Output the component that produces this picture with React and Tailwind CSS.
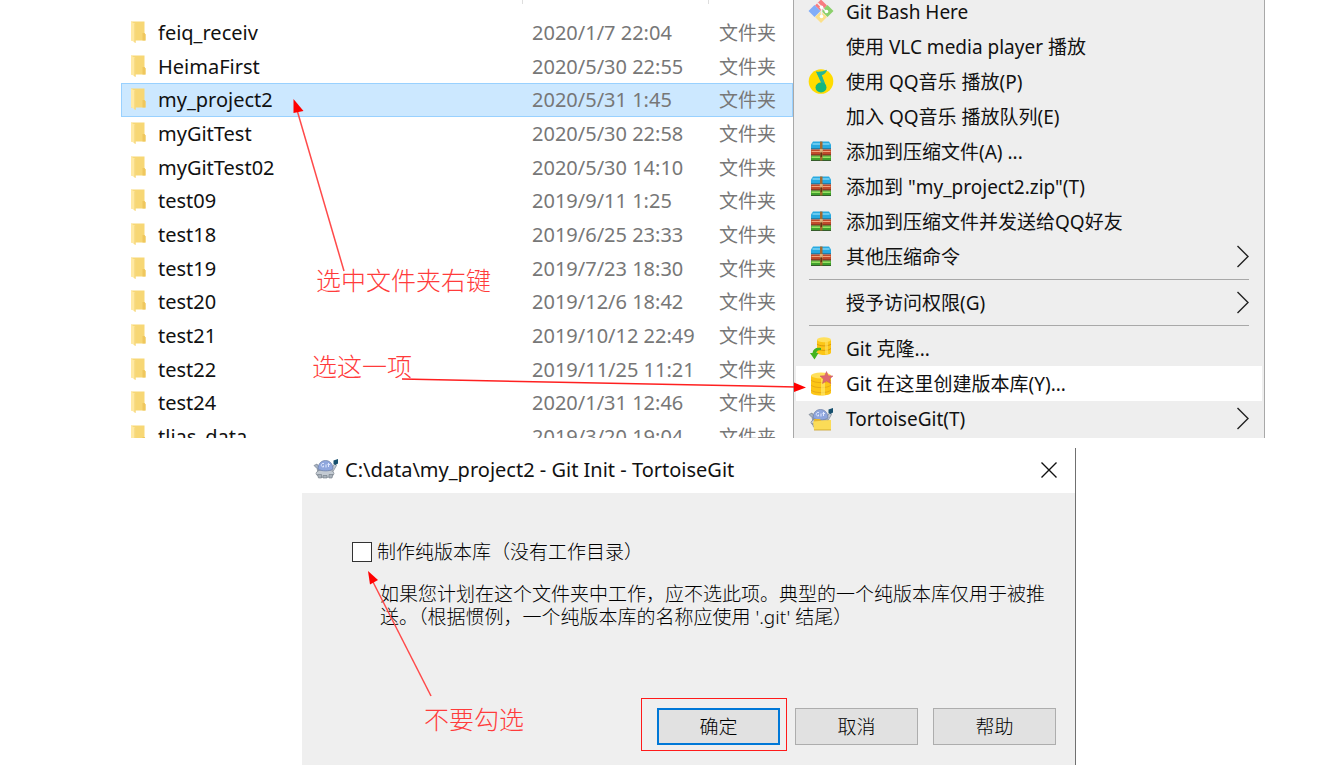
import { useState } from 'react';

const files = [
  { name: 'feiq_receiv', date: '2020/1/7 22:04' },
  { name: 'HeimaFirst', date: '2020/5/30 22:55' },
  { name: 'my_project2', date: '2020/5/31 1:45' },
  { name: 'myGitTest', date: '2020/5/30 22:58' },
  { name: 'myGitTest02', date: '2020/5/30 14:10' },
  { name: 'test09', date: '2019/9/11 1:25' },
  { name: 'test18', date: '2019/6/25 23:33' },
  { name: 'test19', date: '2019/7/23 18:30' },
  { name: 'test20', date: '2019/12/6 18:42' },
  { name: 'test21', date: '2019/10/12 22:49' },
  { name: 'test22', date: '2019/11/25 11:21' },
  { name: 'test24', date: '2020/1/31 12:46' },
  { name: 'tlias_data', date: '2019/3/20 19:04' },
];

const menu = [
  { label: 'Git Bash Here', icon: GitBashIcon },
  { label: '使用 VLC media player 播放' },
  { label: '使用 QQ音乐 播放(P)', icon: MusicIcon },
  { label: '加入 QQ音乐 播放队列(E)' },
  { label: '添加到压缩文件(A) ...', icon: ZipIcon },
  { label: '添加到 "my_project2.zip"(T)', icon: ZipIcon },
  { label: '添加到压缩文件并发送给QQ好友', icon: ZipIcon },
  { label: '其他压缩命令', icon: ZipIcon, sub: true },
  { separator: true },
  { label: '授予访问权限(G)', sub: true },
  { separator: true },
  { label: 'Git 克隆...', icon: CloneIcon },
  { label: 'Git 在这里创建版本库(Y)...', icon: CreateIcon, active: true },
  { label: 'TortoiseGit(T)', icon: TortoiseFolderIcon, sub: true },
];

function FolderIcon() {
  return (
    <svg className="w-4 h-6 shrink-0" viewBox="0 0 16 24">
      <path d="M1 .5h13.5v11.500l1 1.500v6H1z" fill="#f7d775" />
      <path d="M12.500 12h2l1 1.500v6h-3z" fill="#efc75e" />
      <path d="M1 .5l4.500 2.500v19L1 19z" fill="#ffe9a2" />
      <path d="M5.500 3v19l-1-.7V3z" fill="#f2cf6d" />
    </svg>
  );
}

function GitBashIcon() {
  return (
    <svg className="w-[26px] h-[26px]" viewBox="0 0 26 26">
      <path d="M13 .5l6 6-6 6-6-6z" fill="#f77c80" />
      <path d="M6.500 6l6 6-6 6-6-6z" fill="#82adf8" />
      <path d="M19.500 6l6 6-6 6-6-6z" fill="#8bd06c" />
      <path d="M13 12l6 6-6 6-6-6z" fill="#fbe08a" />
      <path d="M9.500 4l4 4v10M13.500 8l5 5" fill="none" stroke="#eeeeee" strokeWidth="1.6" />
      <circle cx="13.500" cy="8.300" r="1.800" fill="#fff" />
      <circle cx="18.500" cy="12.500" r="1.800" fill="#fff" />
      <circle cx="13.500" cy="17.500" r="1.800" fill="#fff" />
    </svg>
  );
}

function MusicIcon() {
  return (
    <svg className="w-[26px] h-[26px]" viewBox="0 0 26 26">
      <circle cx="13" cy="12.500" r="12.300" fill="#ffdc00" />
      <path d="M8 2.500c3.500.6 7.500-.2 11-1.800-.6 2.800-2.700 4.700-5.200 5.600L18 17h-2.500z" fill="#25b795" />
      <path d="M8 2.500l5.500 4L18 18h-3z" fill="#25b795" />
      <ellipse cx="13" cy="18.500" rx="5.500" ry="5" fill="#14b77c" />
    </svg>
  );
}

function ZipIcon() {
  return (
    <svg className="w-[26px] h-[26px]" viewBox="0 0 26 26">
      <path d="M5 2.500h16l2 3V10H3V5.500z" fill="#27a9e0" />
      <path d="M4.500 5h17" stroke="#7fd4f5" strokeWidth="1.500" />
      <path d="M3 10h20" stroke="#1c5571" strokeWidth="1" />
      <path d="M3 10.500h20v6H3z" fill="#c04b2b" />
      <path d="M3.500 12.500h19" stroke="#f0a27b" strokeWidth="1" />
      <path d="M3 16h20" stroke="#5e2a1a" strokeWidth="1" />
      <path d="M3 16.500h20v5H3z" fill="#3fa02c" />
      <path d="M3.500 18.200h19" stroke="#a5e86a" strokeWidth="1.400" />
      <path d="M3 21.500h20" stroke="#355c2b" strokeWidth="1" />
      <path d="M12 2.500h2.500v19H12z" fill="#a5692e" />
      <path d="M11.800 10h3v3.500h-3z" fill="#d9ae74" />
      <path d="M12.500 13.500h1.500V18h-1.500z" fill="#633513" />
    </svg>
  );
}

function CloneIcon() {
  return (
    <svg className="w-[26px] h-[26px]" viewBox="0 0 26 26">
      <path d="M9 4v12.500c0 1.500 3 2.500 7 2.500s7-1 7-2.500V4z" fill="#fcc616" />
      <ellipse cx="16" cy="3.800" rx="7" ry="2.500" fill="#ffe05c" />
      <path d="M9 8c2 2.500 12 2.500 14 0M9 12.500c2 2.500 12 2.500 14 0" fill="none" stroke="#dc9a0a" strokeWidth="1" />
      <path d="M17 5.500h3v13h-3z" fill="#ffe569" opacity=".6" />
      <path d="M13 12c-5-1-8 1-8.500 5H2l4.500 6.500L10.500 17h-2c0-2 1.500-3 4.500-3z" fill="#43b31f" />
    </svg>
  );
}

function CreateIcon() {
  return (
    <svg className="w-[26px] h-[26px]" viewBox="0 0 26 26">
      <path d="M3 4.500v17c0 2 4 3 10 3s10-1 10-3v-17z" fill="#fcc616" />
      <ellipse cx="13" cy="4.500" rx="10" ry="3" fill="#ffe05c" />
      <path d="M3 9c3 3.500 17 3.500 20 0M3 14c3 3.500 17 3.500 20 0M3 19c3 3.500 17 3.500 20 0" fill="none" stroke="#e8ab14" strokeWidth="1" />
      <path d="M13 8h4v16h-4z" fill="#fff07b" opacity=".6" />
      <path d="M18.500.5l1.800 4.200 4.700.3-3.500 3 1.200 4.500-4.200-2.500-4 2.500 1-4.500-3.500-3 4.700-.3z" fill="#de6970" stroke="#c9545c" strokeWidth=".5" />
    </svg>
  );
}

function TortoiseIcon({ folder = false }) {
  return (
    <svg className="w-[26px] h-[26px]" viewBox="0 0 26 26">
      <path d="M1 8.500l3-1.500 3 5-2 3-1-3.500z" fill="#a9b5c5" stroke="#66717f" strokeWidth=".6" />
      <path d="M18 12l3.500-5 2 1.500-3.500 6z" fill="#c4ccd6" stroke="#66717f" strokeWidth=".6" />
      <path d="M20.500 3.500l4.500-1.500v4.500l-2.500 1.500-2-1z" fill="#17506e" />
      <ellipse cx="12" cy="16.500" rx="9" ry="4" fill="#c3cad2" stroke="#717a84" strokeWidth=".6" />
      <path d="M4.500 17.500h4v3.500h-3zM10 18.500h4V21h-4zM16 17.500h4L19 21h-3z" fill="#aab2bb" stroke="#717a84" strokeWidth=".6" />
      <path d="M5 12c0-5.500 3.500-8.500 7.500-8.500S20 6.500 20 12c-3 2.500-12 2.500-15 0z" fill="#8fa6dd" stroke="#6a7ca3" strokeWidth=".7" />
      <path d="M11 6.500c-3-1-4 3.500-.5 3.500V8.500M13 7.500v3M15.500 6v4M14.500 7.500h2.500" fill="none" stroke="#dfe8ff" strokeWidth="1" />
      {folder && (
        <>
          <path d="M6 13h6l1 1.500h10V24H6z" fill="#e5b52e" />
          <path d="M5 15.500l18-1.500v10H6z" fill="#fbdc57" />
          <path d="M6 24h17" stroke="#c99f21" strokeWidth=".8" />
        </>
      )}
    </svg>
  );
}

function TortoiseFolderIcon() {
  return <TortoiseIcon folder />;
}

function Chevron() {
  return (
    <svg className="w-3.5 h-6" viewBox="0 0 14 24" fill="none" stroke="#222" strokeWidth="1.400">
      <path d="M1.500 1l10.500 10.500L1.500 22" />
    </svg>
  );
}

function Note({ className, children }) {
  return (
    <p className={`absolute whitespace-nowrap text-[25px] leading-8 font-light text-[#ff3b3b] ${className}`}>
      {children}
    </p>
  );
}

function FileList() {
  const [selected, setSelected] = useState('my_project2');

  return (
    <div className="flex-1 min-w-0">
      <div className="flex h-4 items-start">
        <div className="flex-1 h-1"></div>
        <div className="w-[187px] h-1 border-x border-[#dedede]"></div>
        <div className="w-[84px]"></div>
      </div>
      <table className="w-full h-[438px] table-fixed border-collapse">
        <colgroup>
          <col />
          <col className="w-[187px]" />
          <col className="w-[84px]" />
        </colgroup>
        <tbody>
          {files.map((file) => (
            <tr
              key={file.name}
              onClick={() => setSelected(file.name)}
              className={
                selected === file.name
                  ? 'bg-[#cce8ff] outline outline-[#99d1ff] -outline-offset-1'
                  : ''
              }
            >
              <td className="p-0 pl-[9px]">
                <div className="flex items-center gap-3">
                  <FolderIcon />
                  <span className="text-xl leading-6 text-[#111]">{file.name}</span>
                </div>
              </td>
              <td className="p-0 pl-2.5 text-xl leading-6 text-[#777]">{file.date}</td>
              <td className="p-0 pl-2.5 text-[#777]">文件夹</td>
            </tr>
          ))}
        </tbody>
      </table>
    </div>
  );
}

function ContextMenu() {
  return (
    <div className="w-[472px] h-full shrink-0 flex flex-col justify-end overflow-hidden border-x border-[#a8a8a8] bg-[#eeeeee] px-0.5 pb-0.5">
      {menu.map((item, i) =>
        item.separator ? (
          <div key={i} className="h-[11px] shrink-0 px-[13px] flex items-center">
            <hr className="w-full border-[#a8a8a8]" />
          </div>
        ) : (
          <button
            key={i}
            className={`h-[35px] shrink-0 w-full flex items-center gap-3 pl-3 pr-3 text-left text-[#111] ${
              item.active ? 'bg-white' : ''
            }`}
          >
            <span className="w-[26px] shrink-0">{item.icon && <item.icon />}</span>
            <span className="flex-1">{item.label}</span>
            {item.sub && <Chevron />}
          </button>
        )
      )}
    </div>
  );
}

function InitDialog() {
  const [bare, setBare] = useState(false);
  const button = 'w-[123px] h-[37px] bg-[#e1e1e1] text-black';

  return (
    <div className="relative ml-[302px] mr-[246px] border-r border-[#707070] bg-[#efefef]">
      <div className="flex items-center h-[45px] bg-white pl-[11px] pr-[18px] pb-0.5">
        <TortoiseIcon />
        <h2 className="flex-1 pl-1.5 text-xl leading-6 text-[#111]">C:\data\my_project2 - Git Init - TortoiseGit</h2>
        <button aria-label="关闭">
          <svg className="w-4 h-4" viewBox="0 0 16 16" stroke="#111" strokeWidth="1.400">
            <path d="M.5.5l15 15M15.500.5l-15 15" />
          </svg>
        </button>
      </div>

      <div className="pt-[47px] pl-[50px] pr-[19px] pb-5">
        <label className="flex items-center gap-[5px] text-black font-light">
          <input
            type="checkbox"
            checked={bare}
            onChange={(e) => setBare(e.target.checked)}
            className="appearance-none w-5 h-5 border border-[#333] bg-white checked:bg-[#0078d7]"
          />
          制作纯版本库（没有工作目录）
        </label>

        <p className="mt-[19px] ml-7 leading-[23px] text-black font-light">
          如果您计划在这个文件夹中工作，应不选此项。典型的一个纯版本库仅用于被推送。（根据惯例，一个纯版本库的名称应使用 '.git' 结尾）
        </p>

        <div className="flex justify-end gap-[15px] mt-[79px] font-light">
          <div className="relative">
            <button className={`${button} border-2 border-[#0078d7]`}>确定</button>
            <div className="absolute -left-4 -right-[7px] -top-2.5 -bottom-1.5 border border-[#ff1a1a] pointer-events-none"></div>
          </div>
          <button className={`${button} border border-[#adadad]`}>取消</button>
          <button className={`${button} border border-[#adadad]`}>帮助</button>
        </div>
      </div>

      {/* arrow to the tick box */}
      <svg className="absolute left-[60px] top-[120px] w-[72px] h-[132px] pointer-events-none" viewBox="0 0 72 132">
        <path d="M69 128L10 12" stroke="#ff4a4a" strokeWidth="1.500" />
        <path d="M6 3l10 9-8 4.500z" fill="#ff0000" />
      </svg>
      <Note className="left-[122px] top-[255px]">不要勾选</Note>
    </div>
  );
}

export default function App() {
  return (
    <main className="min-h-screen bg-white text-[19px] leading-6 font-['Noto_Sans','Noto_Sans_CJK_SC',sans-serif]">
      <section className="relative flex h-[438px] overflow-hidden ml-[121px] mr-[57px]">
        <FileList />
        <ContextMenu />

        {/* arrows to the folder and to the menu item */}
        <svg className="absolute left-[168px] top-[96px] w-[60px] h-[180px] pointer-events-none" viewBox="0 0 60 180">
          <path d="M55 175L8 14" stroke="#ff4a4a" strokeWidth="1.500" />
          <path d="M4.500 3l10 12-10 2z" fill="#ff0000" />
        </svg>
        <svg className="absolute left-[280px] top-[372px] w-[408px] h-[24px] pointer-events-none" viewBox="0 0 408 24">
          <path d="M1 7l394 8" stroke="#ff2020" strokeWidth="1.500" />
          <path d="M405 15.500l-12-5v9.500z" fill="#ff0000" />
        </svg>
        <Note className="left-[195px] top-[264px]">选中文件夹右键</Note>
        <Note className="left-[191px] top-[350px]">选这一项</Note>
      </section>

      <section className="pt-2.5">
        <InitDialog />
      </section>
    </main>
  );
}
